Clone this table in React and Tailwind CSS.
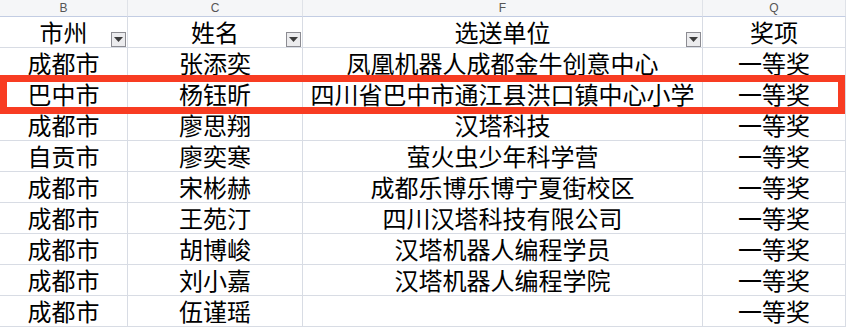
import React from "react";

const rows = [
  ["成都市", "张添奕", "凤凰机器人成都金牛创意中心", "一等奖"],
  ["巴中市", "杨钰昕", "四川省巴中市通江县洪口镇中心小学", "一等奖"],
  ["成都市", "廖思翔", "汉塔科技", "一等奖"],
  ["自贡市", "廖奕寒", "萤火虫少年科学营", "一等奖"],
  ["成都市", "宋彬赫", "成都乐博乐博宁夏街校区", "一等奖"],
  ["成都市", "王苑汀", "四川汉塔科技有限公司", "一等奖"],
  ["成都市", "胡博峻", "汉塔机器人编程学员", "一等奖"],
  ["成都市", "刘小嘉", "汉塔机器人编程学院", "一等奖"],
  ["成都市", "伍谨瑶", "", "一等奖"],
];

const cols = "grid grid-cols-[128px_175px_400px_1fr]";
const cell =
  "h-[31px] flex items-center justify-center border-r border-b border-[#d8dce4] text-[24px] leading-[26px] text-black";

// 筛选下拉按钮
const FilterBtn = () => (
  <span className="absolute right-[1px] bottom-0 w-[15px] h-[15px] border border-[#8c8c92] bg-[#ececee] flex items-center justify-center">
    <svg width="9" height="5" viewBox="0 0 9 5">
      <path d="M0 0h9L4.5 5z" fill="#3c3c3c" />
    </svg>
  </span>
);

const App = () => {
  return (
    <div
      className="relative w-[846px] h-[330px] overflow-hidden bg-white"
      style={{ fontFamily: '"Noto Sans CJK SC", "Noto Sans", sans-serif' }}
    >
      {/* 列标 */}
      <div className={`${cols} bg-[#f5f6f8]`}>
        {["B", "C", "F", "Q"].map((c) => (
          <div
            key={c}
            className="h-[17px] flex items-center justify-center border-r border-b border-r-[#dfe2e8] border-b-[#c3cde3] text-[12px] leading-[14px] text-[#555]"
            style={{ fontFamily: '"Liberation Sans", Arial, sans-serif' }}
          >
            {c}
          </div>
        ))}
      </div>

      {/* 表头 */}
      <div className={cols}>
        <div className={`${cell} relative`}>
          市州
          <FilterBtn />
        </div>
        <div className={`${cell} relative`}>
          姓名
          <FilterBtn />
        </div>
        <div className={`${cell} relative`}>
          选送单位
          <FilterBtn />
        </div>
        <div className={cell}>奖项</div>
      </div>

      {/* 数据 */}
      {rows.map((r, i) => (
        <div key={i} className={cols}>
          {r.map((v, j) => (
            <div key={j} className={cell}>
              {v}
            </div>
          ))}
        </div>
      ))}

      {/* 红框标注 */}
      <div className="absolute left-0 top-[75px] w-[845px] h-[39px] border-[7px] border-[#f83c22]" />
    </div>
  );
};

export default App;
